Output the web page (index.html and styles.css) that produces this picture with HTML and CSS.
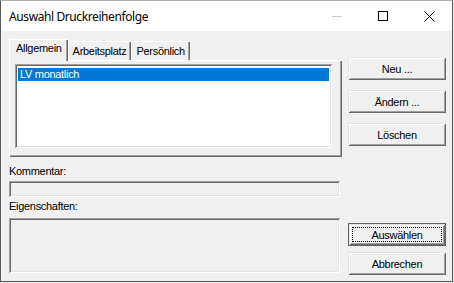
FILE: index.html
```html
<!DOCTYPE html>
<html lang="de">
<head>
    <meta charset="UTF-8">
    <title>Auswahl Druckreihenfolge</title>
    <link rel="stylesheet" href="styles.css">
</head>
<body>
    <div class="window">
        <div class="titlebar">
            <span class="title">Auswahl Druckreihenfolge</span>
            <div class="caption-buttons">
                <span class="cap">
                    <svg width="10" height="10" viewBox="0 0 10 10"><line x1="0" y1="5.5" x2="10" y2="5.5" stroke="#c8c8c8"/></svg>
                </span>
                <span class="cap">
                    <svg width="10" height="10" viewBox="0 0 10 10"><rect x="0.5" y="0.5" width="9" height="9" fill="none" stroke="#000"/></svg>
                </span>
                <span class="cap">
                    <svg width="11" height="11" viewBox="0 0 11 11"><path d="M0.5 0.5L10.5 10.5M10.5 0.5L0.5 10.5" stroke="#000" stroke-width="1"/></svg>
                </span>
            </div>
        </div>

        <div class="client">
            <div class="main">
                <div class="tabs">
                    <div class="tab active">Allgemein</div>
                    <div class="tab">Arbeitsplatz</div>
                    <div class="tab">Persönlich</div>
                </div>
                <div class="tab-panel">
                    <div class="listbox">
                        <div class="list-item selected">LV monatlich</div>
                    </div>
                </div>

                <div class="field-label label-comment">Kommentar:</div>
                <div class="field comment"></div>
                <div class="field-label">Eigenschaften:</div>
                <div class="field props"></div>
            </div>

            <div class="side">
                <button class="btn">Neu ...</button>
                <button class="btn">Ändern ...</button>
                <button class="btn">Löschen</button>
                <div class="bottom-buttons">
                    <button class="btn default"><span class="focus">Auswählen</span></button>
                    <button class="btn">Abbrechen</button>
                </div>
            </div>
        </div>
    </div>
</body>
</html>
```

FILE: styles.css
```css
* {
    margin: 0;
    padding: 0;
    box-sizing: border-box;
}

body {
    background: #e6e6e6;
    font-family: "Liberation Sans", Arial, sans-serif;
    font-size: 11px;
    letter-spacing: -0.3px;
    color: #000;
}

.window {
    width: 453px;
    height: 282px;
    border: 1px solid #5a5a5a;
    border-top-color: #b0b0b0;
    background: #f0f0f0;
    display: flex;
    flex-direction: column;
}

/* Title bar */
.titlebar {
    height: 30px;
    background: #fff;
    display: flex;
    align-items: center;
}

.title {
    flex: 1;
    padding-left: 8px;
    font-family: "Noto Sans", sans-serif;
    font-size: 12px;
    letter-spacing: -0.4px;
}

.caption-buttons {
    display: flex;
    height: 100%;
}

.cap {
    width: 46px;
    display: flex;
    align-items: center;
    justify-content: center;
}

.cap svg {
    display: block;
}

/* Dialog body */
.client {
    flex: 1;
    display: flex;
    gap: 6px;
    padding: 8px 6px 6px 8px;
}

.main {
    width: 333px;
    display: flex;
    flex-direction: column;
}

.tabs {
    display: flex;
    align-items: flex-end;
    height: 21px;
    position: relative;
    z-index: 1;
}

.tab {
    height: 19px;
    padding: 4px 5px 0 5px;
    line-height: 13px;
    background: #f0f0f0;
    box-shadow: inset 1px 1px 0 #fff, inset -1px 0 0 #696969, inset -2px 0 0 #a0a0a0;
}

.tab.active {
    height: 22px;
    margin-bottom: -1px;
    padding: 3px 6px 0 7px;
}

.tab-panel {
    height: 97px;
    display: flex;
    padding: 4px 10px 9px 6px;
    box-shadow: inset 1px 1px 0 #fff, inset -1px -1px 0 #696969, inset -2px -2px 0 #a0a0a0;
}

.listbox {
    flex: 1;
    background: #fff;
    padding: 2px;
    box-shadow: inset 1px 1px 0 #a0a0a0, inset -1px -1px 0 #fff, inset 2px 2px 0 #696969, inset -2px -2px 0 #e3e3e3;
}

.list-item {
    height: 13px;
    margin: 2px 1px 0 1px;
    padding-left: 2px;
    line-height: 13px;
}

.list-item.selected {
    background: #0078d7;
    color: #fff;
}

.field-label {
    margin-top: 3px;
    line-height: 13px;
}

.label-comment {
    margin-top: 8px;
}

.field {
    width: 331px;
    margin-top: 3px;
    box-shadow: inset 1px 1px 0 #a0a0a0, inset -1px -1px 0 #fff, inset 2px 2px 0 #696969, inset -2px -2px 0 #e3e3e3;
}

.comment {
    height: 16px;
}

.props {
    height: 55px;
    margin-top: 5px;
}

/* Buttons */
.side {
    width: 98px;
    display: flex;
    flex-direction: column;
    padding-top: 18px;
    gap: 10px;
}

.bottom-buttons {
    margin-top: auto;
    display: flex;
    flex-direction: column;
    gap: 6px;
}

.btn {
    height: 23px;
    width: 98px;
    border: none;
    background: #f0f0f0;
    font-family: "Liberation Sans", Arial, sans-serif;
    font-size: 11px;
    letter-spacing: -0.3px;
    color: #000;
    box-shadow: inset 1px 1px 0 #e3e3e3, inset -1px -1px 0 #696969, inset 2px 2px 0 #fff, inset -2px -2px 0 #a0a0a0;
}

.btn.default {
    border: 1px solid #646464;
    padding: 3px;
}

.focus {
    display: flex;
    align-items: center;
    justify-content: center;
    height: 100%;
    border: 1px dotted #000;
}
```
